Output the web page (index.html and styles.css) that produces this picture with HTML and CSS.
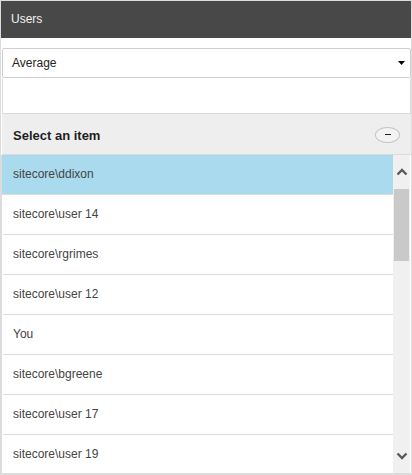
FILE: index.html
```html
<!DOCTYPE html>
<html>
<head>
<meta charset="utf-8">
<link rel="stylesheet" href="styles.css">
</head>
<body>
<div class="panel">
  <div class="header">Users</div>
  <div class="content">
    <div class="select">
      <span>Average</span>
      <svg class="caret" width="7" height="4" viewBox="0 0 7 4"><polygon points="0,0 7,0 3.5,4" fill="#000"/></svg>
    </div>
    <div class="blank"></div>
    <div class="section">
      <span class="section-title">Select an item</span>
      <span class="collapse"><span class="minus"></span></span>
    </div>
    <div class="list">
      <div class="rows">
        <div class="row selected">sitecore\ddixon</div>
        <div class="row">sitecore\user 14</div>
        <div class="row">sitecore\rgrimes</div>
        <div class="row">sitecore\user 12</div>
        <div class="row">You</div>
        <div class="row">sitecore\bgreene</div>
        <div class="row">sitecore\user 17</div>
        <div class="row">sitecore\user 19</div>
      </div>
      <div class="scrollbar">
        <div class="arrow-btn up">
          <svg width="12" height="8" viewBox="0 0 12 8"><polyline points="1.5,6.5 6,2 10.5,6.5" fill="none" stroke="#5a5a5a" stroke-width="2.4"/></svg>
        </div>
        <div class="thumb"></div>
        <div class="track-fill"></div>
        <div class="arrow-btn down">
          <svg width="12" height="8" viewBox="0 0 12 8"><polyline points="1.5,1.5 6,6 10.5,1.5" fill="none" stroke="#5a5a5a" stroke-width="2.4"/></svg>
        </div>
      </div>
    </div>
  </div>
</div>
</body>
</html>
```
FILE: styles.css
```css
* { box-sizing: border-box; }
html, body {
  margin: 0;
  padding: 0;
  background: #fff;
}
body {
  width: 412px;
  height: 475px;
  overflow: hidden;
  font-family: "Liberation Sans", Arial, sans-serif;
}
.panel {
  width: 412px;
  height: 475px;
  border: 1px solid #dcdcdc;
  display: flex;
  flex-direction: column;
}
.header {
  height: 37px;
  background: #484848;
  color: #f2f2f2;
  font-size: 12px;
  line-height: 37px;
  padding-left: 10px;
  flex: none;
}
.content {
  flex: 1;
  display: flex;
  flex-direction: column;
  padding: 10px 0 0 1px;
  min-height: 0;
}
.select {
  height: 30px;
  border: 1px solid #cfcfcf;
  border-radius: 2px;
  display: flex;
  align-items: center;
  justify-content: space-between;
  padding: 0 5px 0 9px;
  font-size: 12px;
  color: #222;
  flex: none;
}
.caret { display: block; }
.blank {
  height: 35px;
  border: 1px solid #dedede;
  border-top: none;
  border-bottom: none;
  flex: none;
}
.section {
  height: 42px;
  background: #eeeeee;
  border-top: 1px solid #dadada;
  border-bottom: 1px solid #dadada;
  display: flex;
  align-items: center;
  justify-content: space-between;
  padding: 2px 11px 0 11px;
  flex: none;
}
.section-title {
  font-weight: bold;
  font-size: 13px;
  color: #1e1e1e;
}
.collapse {
  width: 25px;
  height: 16px;
  border: 1px solid #c4c4c4;
  border-radius: 50%;
  background: #f3f3f3;
  display: flex;
  align-items: center;
  justify-content: center;
  margin-top: -1px;
}
.minus {
  width: 6px;
  height: 1px;
  background: #222;
}
.list {
  flex: 1;
  min-height: 0;
  display: flex;
  border-left: 1px solid #dcdcdc;
  border-bottom: 1px solid #dcdcdc;
  margin-left: -1px;
}
.rows {
  flex: 1;
  overflow: hidden;
}
.row {
  height: 40px;
  border-bottom: 1px solid #dcdcdc;
  padding-left: 10px;
  line-height: 39px;
  font-size: 12px;
  color: #444;
  margin-left: 1px;
}
.row.selected {
  background: #a9daee;
  margin-left: 0;
  padding-left: 11px;
}
.scrollbar {
  width: 17px;
  background: #f0f0f0;
  display: flex;
  flex-direction: column;
  align-items: center;
  flex: none;
  margin-right: 1px;
}
.arrow-btn {
  height: 34px;
  width: 100%;
  display: flex;
  align-items: center;
  justify-content: center;
  flex: none;
}
.arrow-btn svg { display: block; }
.thumb {
  width: 15px;
  height: 72px;
  background: #c9c9c9;
  flex: none;
}
.track-fill { flex: 1; }
```
